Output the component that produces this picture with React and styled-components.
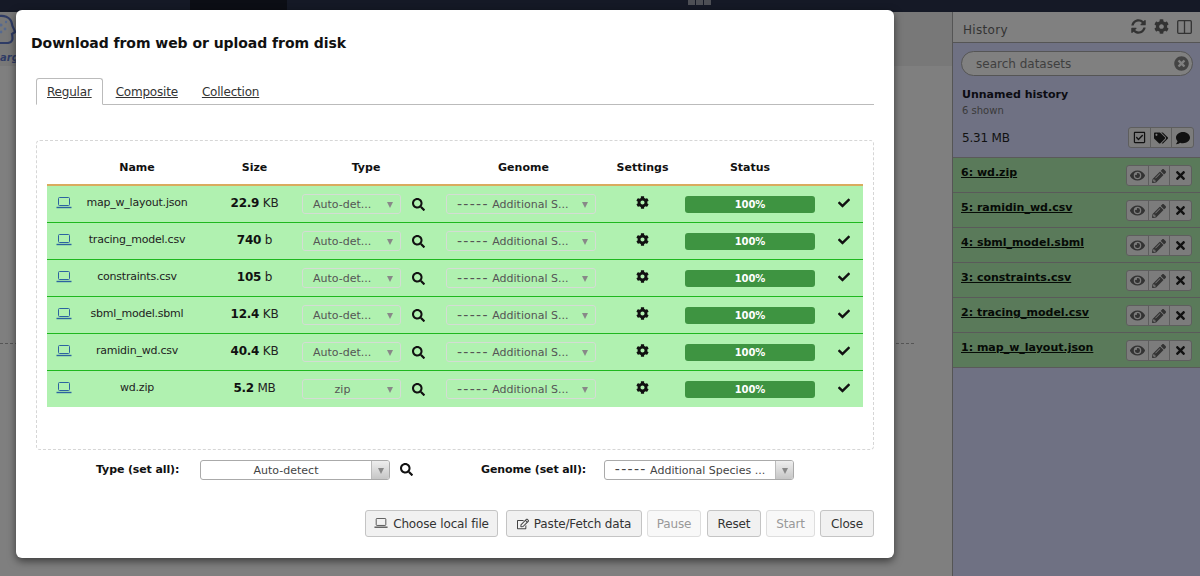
import React from "react";
import styled, { createGlobalStyle } from "styled-components";
import { FaSearch, FaCog, FaCheck, FaEye, FaPencilAlt, FaTimes, FaSyncAlt, FaRegCheckSquare, FaTags, FaComment, FaRegEdit, FaTimesCircle } from "react-icons/fa";

const Global = createGlobalStyle`
  html, body { margin: 0; padding: 0; height: 100%; overflow: hidden; }
  body { font-family: "DejaVu Sans", "Liberation Sans", sans-serif; font-size: 12px; color: #111; }
  * { box-sizing: border-box; }
`;

const Page = styled.div`
  position: relative;
  width: 1200px;
  height: 576px;
  overflow: hidden;
  display: flex;
  flex-direction: column;
  background: #7f7f7f;
`;
const TopBar = styled.div`
  height: 12px;
  background: #151926;
  flex: none;
  display: flex;
  padding-left: 190px;
`;
const ActiveTab = styled.div`
  width: 97px;
  background: #0c0e15;
`;
const GridSquares = styled.div`
  margin-left: 401px;
  display: flex;
  gap: 1px;
  height: 5px;
`;
const GridSquare = styled.span`
  width: 7px;
  background: #4d4f55;
`;
const Workspace = styled.div`
  flex: 1;
  display: flex;
  min-height: 0;
`;
const Center = styled.div`
  flex: 1;
  display: flex;
  flex-direction: column;
`;
const Masthead = styled.div`
  height: 54px;
  background: #787878;
  color: #2f3c66;
  display: flex;
  flex-direction: column;
  padding-top: 2px;
`;
const LogoWord = styled.span`
  font-style: italic;
  font-weight: 700;
  font-size: 10px;
  line-height: 13px;
  margin-top: 3px;
  white-space: nowrap;
`;
const Canvas = styled.div`
  flex: 1;
  padding-top: 277px;
`;
const CanvasRule = styled.div`
  border-top: 1px dashed #555;
  margin-right: 38px;
`;
const History = styled.aside`
  width: 248px;
  flex: none;
  background: #6f7183;
  border-left: 1px solid #555;
  display: flex;
  flex-direction: column;
`;
const HistoryHead = styled.div`
  height: 31px;
  flex: none;
  background: #808080;
  border-bottom: 1px solid #555;
  display: flex;
  align-items: center;
  justify-content: space-between;
  padding: 6px 8px 0 10px;
  color: #333;
  font-size: 12px;
  letter-spacing: .3px;
  svg { display: block; }
`;
const HeadIcons = styled.div`
  display: flex;
  gap: 8px;
  color: #333;
  font-size: 15px;
  align-items: center;
  margin-top: -7px;
`;
const SearchPill = styled.div`
  margin: 8px 7px 0 8px;
  height: 25px;
  border: 1px solid #555;
  border-radius: 13px;
  background: #808080;
  color: #3f3f3f;
  font-size: 12px;
  display: flex;
  align-items: center;
  justify-content: space-between;
  padding: 0 3px 0 14px;
  svg { font-size: 15px; color: #444; }
`;
const HistoryName = styled.div`
  margin: 11px 0 0 9px;
  font-size: 11px;
  font-weight: 700;
  color: #0c0c12;
  line-height: 15px;
`;
const Shown = styled.div`
  margin: 2px 0 0 9px;
  font-size: 10px;
  color: #3a3a3a;
  line-height: 13px;
`;
const SizeRow = styled.div`
  margin: 9px 6px 9px 9px;
  display: flex;
  align-items: center;
  justify-content: space-between;
  font-size: 12px;
  letter-spacing: -.2px;
  color: #111;
  height: 22px;
  padding-top: 1px;
`;
const IconGroup = styled.div`
  display: flex;
  width: 66px;
  height: 21px;
  border: 1px solid #5e5e5e;
  border-radius: 3px;
  background: #7c7c7c;
  color: #151515;
`;
const IconCell = styled.span`
  flex: 1;
  display: flex;
  align-items: center;
  justify-content: center;
  font-size: ${p => p.$size || 14}px;
  color: ${p => p.$soft ? "#333" : "#111"};
  & + & { border-left: 1px solid #5e5e5e; }
`;
const Item = styled.div`
  height: 35px;
  flex: none;
  background: #5a7a5a;
  border-top: 1px solid #5a5a5a;
  display: flex;
  justify-content: space-between;
  padding: 7px 8px 0 8px;
  &:last-of-type { border-bottom: 1px solid #5a5a5a; height: 36px; }
`;
const ItemTitle = styled.span`
  font-size: 11px;
  font-weight: 700;
  color: #060a06;
  text-decoration: underline;
  line-height: 15px;
`;

const Modal = styled.div`
  position: absolute;
  left: 16px;
  top: 10px;
  width: 878px;
  height: 548px;
  background: #fff;
  border-radius: 6px;
  box-shadow: 0 3px 9px rgba(0, 0, 0, .55);
  padding: 0 20px;
  display: flex;
  flex-direction: column;
`;
const ModalTitle = styled.h4`
  margin: 24px 0 0 -5px;
  font-size: 14px;
  line-height: 18px;
  font-weight: 700;
  letter-spacing: -.05px;
  color: #111;
`;
const Tabs = styled.div`
  margin-top: 26px;
  height: 27px;
  display: flex;
  border-bottom: 1px solid #bbb;
  flex: none;
`;
const Tab = styled.div`
  height: 27px;
  padding: 7px 10px 0;
  margin-right: 4px;
  font-size: 12px;
  letter-spacing: -.2px;
  line-height: 15px;
  color: #333;
  text-decoration: underline;
  ${p => p.$active && `
    border: 1px solid #bbb;
    border-bottom-color: #fff;
    border-radius: 3px 3px 0 0;
    background: #fff;
    margin-right: 3px;
    padding: 6px 10px 0;
  `}
`;
const DropBox = styled.div`
  margin-top: 35px;
  height: 310px;
  border: 1px dashed #d6d6d6;
  border-radius: 4px;
  padding: 0 10px;
  flex: none;
`;
const columns = "32px 116px 107px 135px 173px 65px 150px 38px";
const HeadRow = styled.div`
  display: grid;
  grid-template-columns: ${columns};
  height: 45px;
  align-items: center;
  border-bottom: 2px solid #d9ab5e;
  font-weight: 700;
  font-size: 11px;
  color: #111;
  text-align: center;
  padding-top: 10px;
`;
const HeadSize = styled.div`padding-left: 12px;`;
const HeadType = styled.div`padding-right: 7px;`;
const Row = styled.div`
  display: grid;
  grid-template-columns: ${columns};
  height: 37px;
  background: #b0f1b0;
  align-items: center;
  border-top: 1px solid #1fb81f;
  ${HeadRow} + & { height: 36px; border-top: 0; }
`;
const IconCol = styled.div`
  display: flex;
  justify-content: center;
  color: #2c63a0;
  margin-top: -2px;
  padding-left: 1px;
`;
const NameCol = styled.div`
  text-align: center;
  font-size: 11px;
  letter-spacing: -.22px;
  color: #222;
  margin-top: -3px;
`;
const SizeCol = styled.div`
  text-align: center;
  padding-left: 12px;
  font-size: 12px;
  letter-spacing: -.25px;
  color: #222;
  margin-top: -2px;
  b { color: #111; }
`;
const TypeCol = styled.div`
  display: flex;
  align-items: center;
  gap: 11px;
  font-size: 13px;
  color: #111;
`;
const GenomeCol = styled.div`
  padding-left: 9px;
`;
const RowSelect = styled.div`
  width: ${p => p.$w}px;
  height: 20px;
  border: 1px solid #d4dcd4;
  border-radius: 3px;
  display: flex;
  align-items: center;
  justify-content: ${p => p.$center ? "center" : "flex-start"};
  padding: 0 ${p => p.$center ? 18 : 0}px 0 ${p => p.$center ? 0 : 10}px;
  font-size: 11px;
  color: #555;
  position: relative;
  white-space: pre;
`;
const Dashes = styled.span`
  font-size: 14px;
  line-height: 12px;
  letter-spacing: 1.3px;
`;
const Caret = styled.span`
  position: absolute;
  right: 7px;
  top: 7px;
  border-left: 3px solid transparent;
  border-right: 3px solid transparent;
  border-top: 6px solid #888;
`;
const SettingsCol = styled.div`
  display: flex;
  justify-content: center;
  font-size: 13px;
  color: #111;
  margin-top: -3px;
`;
const StatusCol = styled.div`
  padding: 0 10px;
`;
const Bar = styled.div`
  height: 17px;
  background: #3e9441;
  border-radius: 3px;
  color: #fff;
  font-size: 10px;
  font-weight: 700;
  letter-spacing: -.1px;
  display: flex;
  align-items: center;
  justify-content: center;
`;
const CheckCol = styled.div`
  display: flex;
  justify-content: center;
  font-size: 12px;
  color: #111;
  margin-top: -2px;
`;
const SetAll = styled.div`
  margin-top: 10px;
  display: grid;
  grid-template-columns: 60px 104px 190px 23px 68px 123px 190px;
  align-items: center;
  height: 20px;
  flex: none;
`;
const SetLabel = styled.label`
  font-weight: 700;
  font-size: 11px;
  letter-spacing: -.12px;
  color: #111;
  margin-top: -2px;
`;
const Spacer = styled.div``;
const SetIcon = styled.div`
  font-size: 13px;
  display: flex;
  justify-content: flex-end;
  color: #111;
  margin-top: -2px;
`;
const SetSelect = styled.div`
  height: 20px;
  border: 1px solid #aaa;
  border-radius: 3px;
  display: flex;
  font-size: 11px;
  color: #444;
  overflow: hidden;
  background: #fff;
`;
const SetValue = styled.div`
  flex: 1;
  text-align: center;
  line-height: 19px;
  white-space: pre;
`;
const SetArrow = styled.div`
  width: 18px;
  background: linear-gradient(#eee, #c6c6c6);
  border-left: 1px solid #bbb;
  position: relative;
`;
const SetCaret = styled(Caret)`
  right: 5px;
  top: 7px;
`;
const Footer = styled.div`
  margin-top: 30px;
  display: flex;
  justify-content: flex-end;
  gap: 5px;
  flex: none;
`;
const Button = styled.button`
  width: ${p => p.$w}px;
  height: 27px;
  padding: 0;
  margin-right: ${p => p.$gap || 0}px;
  border: 1px solid ${p => p.disabled ? "#dedede" : "#c4c4c4"};
  border-radius: 3px;
  background: ${p => p.disabled ? "#f8f8f8" : "#f1f1f1"};
  color: ${p => p.disabled ? "#999" : "#333"};
  font-family: inherit;
  font-size: 12px;
  letter-spacing: -.15px;
  display: flex;
  align-items: center;
  justify-content: center;
  gap: 5px;
  svg { color: #444; }
`;

const Laptop = ({ size = 16 }) => (
  <svg width={size} height={size * 0.75} viewBox="0 0 16 12" fill="none" stroke="currentColor">
    <rect x="2.5" y="0.5" width="11" height="8" rx="1" />
    <path d="M0.5 10.5h15" strokeWidth="1.4" />
  </svg>
);
const PanelToggle = () => (
  <svg width="15" height="14" viewBox="0 0 15 14" fill="none" stroke="currentColor" strokeWidth="1.3">
    <rect x="0.7" y="0.7" width="13.6" height="12.6" rx="1" />
    <path d="M7.5 0.7v12.6" />
  </svg>
);
const LogoHead = () => (
  <svg width="16" height="34" viewBox="0 0 16 34" fill="none" stroke="currentColor" strokeWidth="2.2">
    <path d="M-4 3C3 0 11 3 12 10c0 3 3 6 3 8l-3 2c1 5 1 8-4 9H-2" />
    <circle cx="1" cy="11" r="1.6" fill="#56698f" stroke="none" />
    <circle cx="5" cy="15" r="1.4" fill="#56698f" stroke="none" />
    <circle cx="1" cy="18" r="1.4" fill="#56698f" stroke="none" />
    <circle cx="6" cy="8" r="1.2" fill="#56698f" stroke="none" />
  </svg>
);

const uploads = [
  { name: "map_w_layout.json", num: "22.9", unit: "KB", type: "Auto-det..." },
  { name: "tracing_model.csv", num: "740", unit: "b", type: "Auto-det..." },
  { name: "constraints.csv", num: "105", unit: "b", type: "Auto-det..." },
  { name: "sbml_model.sbml", num: "12.4", unit: "KB", type: "Auto-det..." },
  { name: "ramidin_wd.csv", num: "40.4", unit: "KB", type: "Auto-det..." },
  { name: "wd.zip", num: "5.2", unit: "MB", type: "zip", center: true },
];
const datasets = ["6: wd.zip", "5: ramidin_wd.csv", "4: sbml_model.sbml", "3: constraints.csv", "2: tracing_model.csv", "1: map_w_layout.json"];

export default function App() {
  return (
    <Page>
      <Global />
      <TopBar>
        <ActiveTab />
        <GridSquares><GridSquare /><GridSquare /><GridSquare /></GridSquares>
      </TopBar>
      <Workspace>
        <Center>
          <Masthead>
            <LogoHead />
            <LogoWord>arg</LogoWord>
          </Masthead>
          <Canvas><CanvasRule /></Canvas>
        </Center>
        <History>
          <HistoryHead>
            <span>History</span>
            <HeadIcons><FaSyncAlt /><FaCog /><PanelToggle /></HeadIcons>
          </HistoryHead>
          <SearchPill><span>search datasets</span><FaTimesCircle /></SearchPill>
          <HistoryName>Unnamed history</HistoryName>
          <Shown>6 shown</Shown>
          <SizeRow>
            <span>5.31 MB</span>
            <IconGroup>
              <IconCell $size={13}><FaRegCheckSquare /></IconCell>
              <IconCell><FaTags /></IconCell>
              <IconCell><FaComment /></IconCell>
            </IconGroup>
          </SizeRow>
          {datasets.map(d => (
            <Item key={d}>
              <ItemTitle>{d}</ItemTitle>
              <IconGroup>
                <IconCell $soft $size={15}><FaEye /></IconCell>
                <IconCell $soft><FaPencilAlt /></IconCell>
                <IconCell $size={13}><FaTimes /></IconCell>
              </IconGroup>
            </Item>
          ))}
        </History>
      </Workspace>
      <Modal>
        <ModalTitle>Download from web or upload from disk</ModalTitle>
        <Tabs>
          <Tab $active>Regular</Tab>
          <Tab>Composite</Tab>
          <Tab>Collection</Tab>
        </Tabs>
        <DropBox>
          <HeadRow>
            <div />
            <div>Name</div>
            <HeadSize>Size</HeadSize>
            <HeadType>Type</HeadType>
            <div>Genome</div>
            <div>Settings</div>
            <div>Status</div>
            <div />
          </HeadRow>
          {uploads.map(u => (
            <Row key={u.name}>
              <IconCol><Laptop /></IconCol>
              <NameCol>{u.name}</NameCol>
              <SizeCol><b>{u.num}</b> {u.unit}</SizeCol>
              <TypeCol>
                <RowSelect $w={99} $center={u.center}>{u.type}<Caret /></RowSelect>
                <FaSearch />
              </TypeCol>
              <GenomeCol>
                <RowSelect $w={150}><Dashes>-----</Dashes> Additional S...<Caret /></RowSelect>
              </GenomeCol>
              <SettingsCol><FaCog /></SettingsCol>
              <StatusCol><Bar>100%</Bar></StatusCol>
              <CheckCol><FaCheck /></CheckCol>
            </Row>
          ))}
        </DropBox>
        <SetAll>
          <Spacer />
          <SetLabel>Type (set all):</SetLabel>
          <SetSelect><SetValue>Auto-detect</SetValue><SetArrow><SetCaret /></SetArrow></SetSelect>
          <SetIcon><FaSearch /></SetIcon>
          <Spacer />
          <SetLabel>Genome (set all):</SetLabel>
          <SetSelect><SetValue><Dashes>-----</Dashes> Additional Species ...</SetValue><SetArrow><SetCaret /></SetArrow></SetSelect>
        </SetAll>
        <Footer>
          <Button $w={133} $gap={3}><Laptop size={14} />Choose local file</Button>
          <Button $w={136}><FaRegEdit />Paste/Fetch data</Button>
          <Button $w={54} $gap={1} disabled>Pause</Button>
          <Button $w={54}>Reset</Button>
          <Button $w={49} disabled>Start</Button>
          <Button $w={54}>Close</Button>
        </Footer>
      </Modal>
    </Page>
  );
}
